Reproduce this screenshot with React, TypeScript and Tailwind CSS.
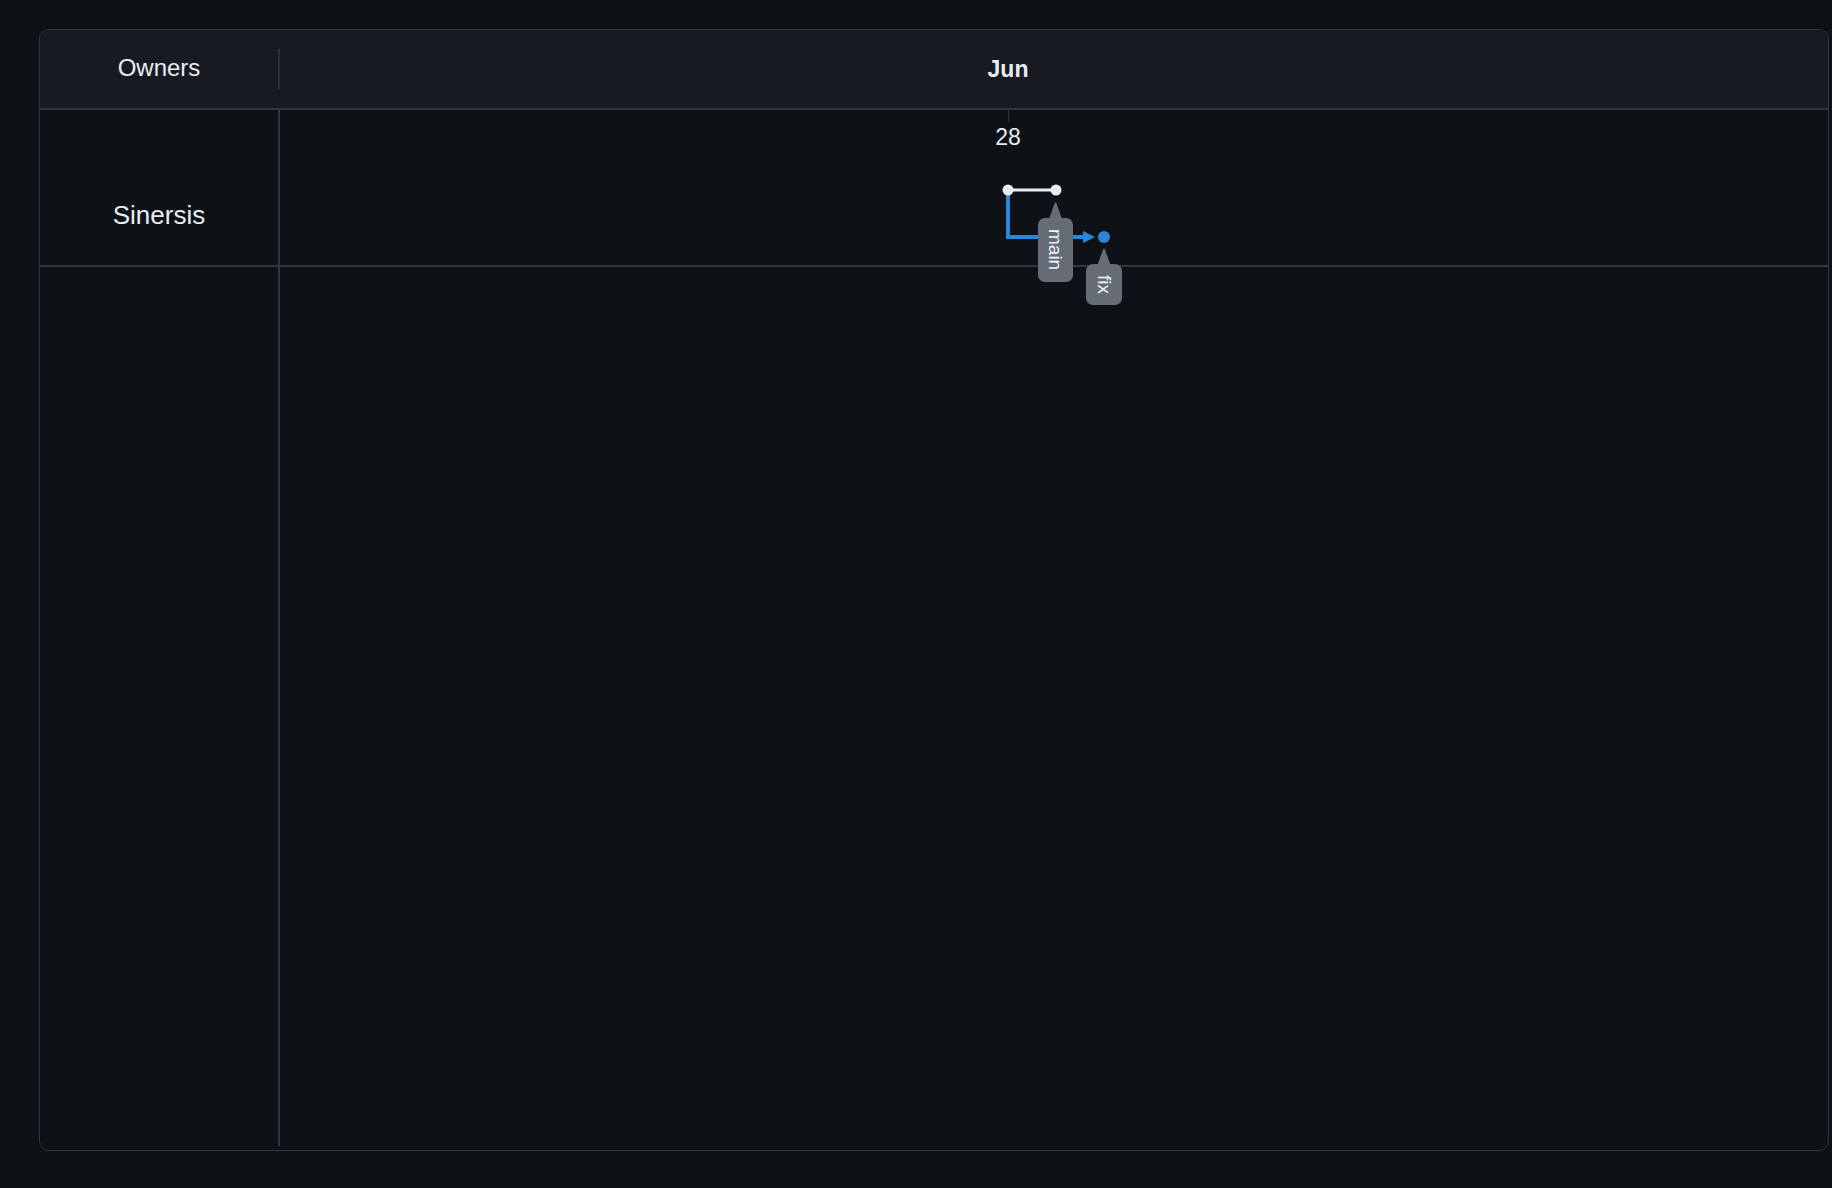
const font = { fontFamily: '"Liberation Sans", Arial, sans-serif' };

function Label({ text, left, top, width, height }: { text: string; left: number; top: number; width: number; height: number }) {
  return (
    <div className="absolute" style={{ left, top: top - 16, width, height: height + 16 }}>
      <svg className="absolute left-0 top-0" width={width} height={17} viewBox={`0 0 ${width} 17`}>
        <path d={`M${width / 2 - 6.5} 17 L${width / 2 - 1} 1.5 Q${width / 2} -0.5 ${width / 2 + 1} 1.5 L${width / 2 + 6.5} 17 Z`} fill="#656c76" />
      </svg>
      <div
        className="absolute bottom-0 left-0 flex items-center justify-center rounded-[7px] bg-[#656c76] text-[19px] leading-none text-[#f0f3f6]"
        style={{ width, height }}
      >
        <span className="[writing-mode:vertical-rl]">{text}</span>
      </div>
    </div>
  );
}

function Graph() {
  return (
    <svg className="absolute left-[950px] top-[150px]" width={140} height={130} viewBox="0 0 140 130">
      <path d="M18 10 V57 H94" fill="none" stroke="#2a86d9" strokeWidth={4} strokeLinejoin="miter" />
      <polygon points="93,51 105,57 93,63" fill="#2a86d9" />
      <circle cx={114} cy={57} r={6} fill="#2a86d9" />
      <line x1={18} y1={10} x2={66} y2={10} stroke="#e6edf3" strokeWidth={3} />
      <circle cx={18} cy={10} r={5.5} fill="#e6edf3" />
      <circle cx={66} cy={10} r={5.5} fill="#e6edf3" />
    </svg>
  );
}

export default function App() {
  return (
    <div className="h-[1188px] w-[1832px] bg-[#0e1116] pl-[39px] pt-[29px] text-[#e6edf3]" style={font}>
      <div className="relative flex h-[1122px] w-[1790px] flex-col overflow-hidden rounded-[10px] border border-[#30363d]">
        {/* header */}
        <div className="flex h-[80px] shrink-0 items-center border-b-2 border-[#30363d] bg-[#171b21]">
          <div className="flex h-full w-[238px] justify-center pt-[24px] text-[24px] leading-[28px]">Owners</div>
          <div className="h-[40px] w-[2px] bg-[#2b3037]" />
          <div className="flex-1" />
        </div>

        {/* rows */}
        <div className="flex h-[157px] shrink-0 border-b-2 border-[#30363d]">
          <div className="flex w-[238px] justify-center pt-[90px] text-[26px] leading-[30px]">Sinersis</div>
          <div className="w-[2px] bg-[#30363d]" />
          <div className="flex-1" />
        </div>
        <div className="flex flex-1 pb-[4px]">
          <div className="w-[238px]" />
          <div className="w-[2px] bg-[#30363d]" />
          <div className="flex-1" />
        </div>

        {/* timeline canvas */}
        <div className="absolute left-[928px] top-[26px] w-[80px] text-center text-[23px] font-bold leading-[26px]">Jun</div>
        <div className="absolute left-[968px] top-[80px] h-[12px] w-px bg-[#30363d]" />
        <div className="absolute left-[928px] top-[94px] w-[80px] text-center text-[23px] leading-[26px]">28</div>
        <Graph />
        <Label text="main" left={998} top={188} width={35} height={64} />
        <Label text="fix" left={1046} top={234} width={36} height={41} />
      </div>
    </div>
  );
}
